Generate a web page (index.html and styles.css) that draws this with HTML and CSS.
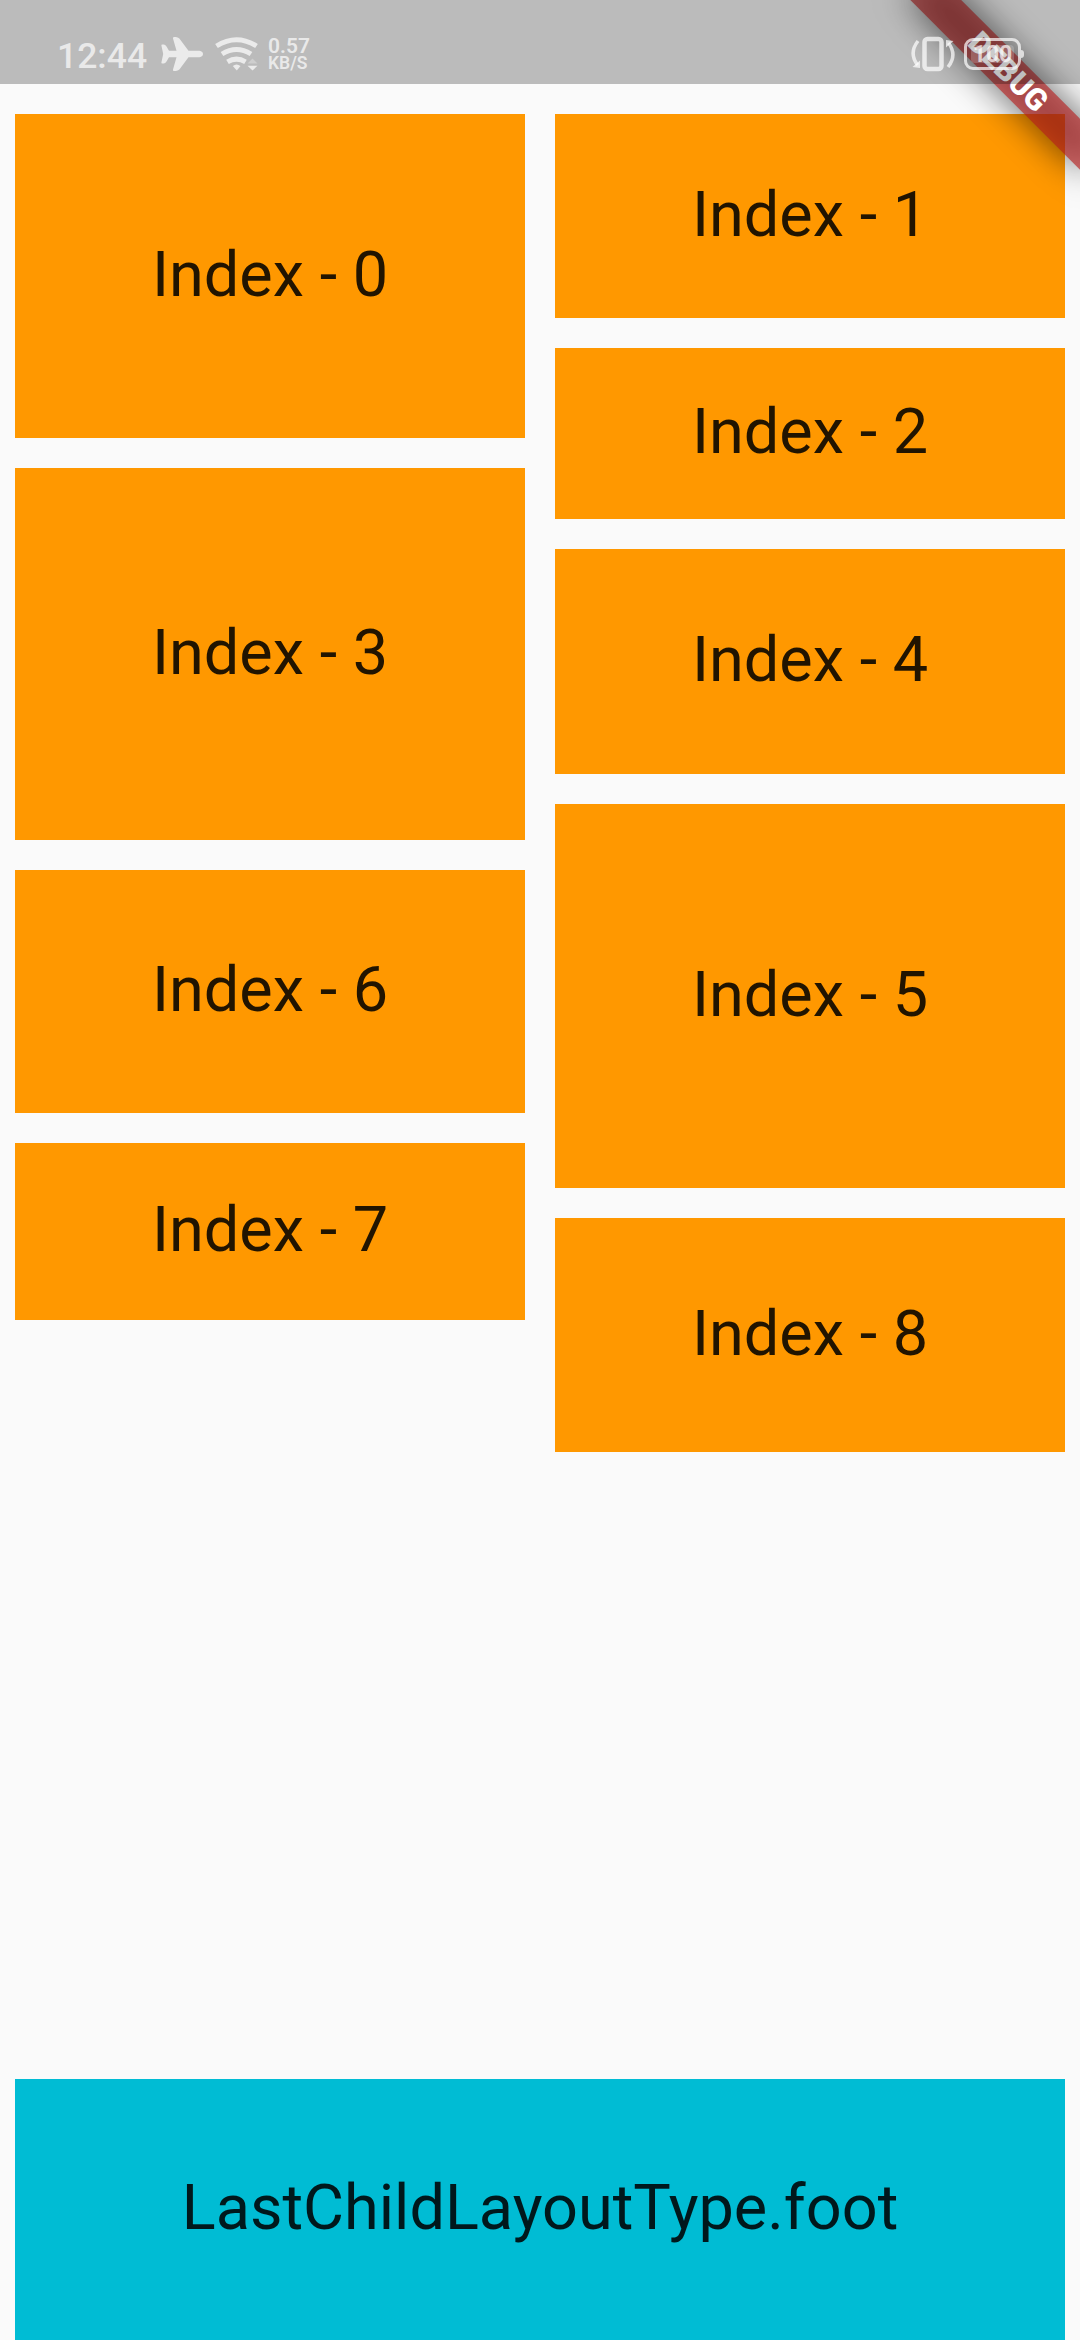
FILE: index.html
```html
<!DOCTYPE html>
<html lang="en">
<head>
<meta charset="utf-8">
<title>Waterfall flow</title>
<link rel="stylesheet" href="styles.css">
</head>
<body>
<div class="screen">
  <header class="status">
    <div class="status-left">
      <span class="clock">12:44</span>
      <svg class="plane" width="43" height="35" viewBox="0 0 43 35"><path d="M38.500 13.800H27.500L19.500 3C18 .8 16.500 0 14.500 0H13Q11.600 0 12 1.500L15.500 13.800H8L5.500 9.500Q4.300 7.600 2.700 7.600H1.200Q.2 7.600 .4 8.500L2.200 17L.4 25.500Q.2 26.500 1.200 26.500H2.700Q4.300 26.500 5.500 24.500L8 20.200H15.500L12 32.500Q11.600 34 13 34H14.500C16.500 34 18 33.200 19.500 31L27.500 20.200H38.500Q42 19.500 42 17T38.500 13.800Z"/></svg>
      <svg class="wifi" width="44" height="34" viewBox="0 0 44 34"><g fill="none" stroke-width="5"><path d="M1.500 9Q21.500-3.500 41.500 9"/><path d="M7 17Q21.500 8 36 17"/><path d="M12.500 24.800Q21.500 19.400 30.500 24.800"/></g><path class="solid" d="M17.800 29Q21.500 26 25.500 29L21.800 33.500Z"/><path class="faint" d="M32.500 26.500L37.500 21.500L42.500 26.500Z"/><path class="solid" d="M32.500 28.800H42.500L37.500 33.500Z"/></svg>
      <span class="rate"><span class="rate-value">0.57</span><span class="rate-unit">KB/S</span></span>
    </div>
    <div class="status-right">
      <svg class="vibrate" width="44" height="36" viewBox="0 0 44 36"><g fill="none" stroke-width="3.500"><rect x="13.500" y="3" width="17" height="30" rx="3" stroke-width="4.500"/><path d="M7 5Q-2.500 17 6.500 29"/><path d="M37 31Q46.500 19 37.500 7"/></g><path class="solid" d="M1.500 31L9 24.500V32ZM42.500 5L35 4V11.500Z"/></svg>
      <span class="battery"><span>100</span></span>
    </div>
  </header>
  <main class="flow">
    <div class="column">
      <div class="card h324">Index - 0</div>
      <div class="card h372">Index - 3</div>
      <div class="card h243">Index - 6</div>
      <div class="card h177">Index - 7</div>
    </div>
    <div class="column">
      <div class="card h204">Index - 1</div>
      <div class="card h171">Index - 2</div>
      <div class="card h225">Index - 4</div>
      <div class="card h384">Index - 5</div>
      <div class="card h234">Index - 8</div>
    </div>
  </main>
  <footer class="card foot">LastChildLayoutType.foot</footer>
  <div class="banner"><span>DEBUG</span></div>
</div>
</body>
</html>
```
FILE: styles.css
```css
* { box-sizing: border-box; }
body { margin: 0; background: #fafafa; font-family: Roboto, sans-serif; }
.screen {
  position: relative;
  display: flex;
  flex-direction: column;
  width: 1080px;
  height: 2340px;
  overflow: hidden;
}
.status {
  position: relative;
  z-index: 2;
  display: flex;
  justify-content: space-between;
  height: 84px;
  padding: 0 56px 0 57px;
  background: rgba(0, 0, 0, .25);
  color: rgba(255, 255, 255, .7);
}
.status-left, .status-right { display: flex; align-items: flex-start; }
.status svg { fill: currentColor; stroke: none; }
.status g { stroke: currentColor; fill: none; }
.status .faint { opacity: .4; }
.clock { width: 104px; padding-top: 35px; font-size: 35.5px; line-height: 42px; font-weight: 500; }
.plane { margin-top: 37px; }
.wifi { margin: 37px 0 0 11px; }
.rate {
  display: flex;
  flex-direction: column;
  margin: 37px 0 0 9px;
  font-weight: 600;
}
.rate-value { font-size: 21px; line-height: 18px; }
.rate-unit { font-size: 17.5px; line-height: 16px; }
.vibrate { margin-top: 36px; }
.battery {
  position: relative;
  display: flex;
  align-items: center;
  justify-content: center;
  width: 57px;
  height: 32px;
  margin: 38px 3px 0 9px;
  border: 3.5px solid currentColor;
  border-radius: 9px;
  font-size: 23px;
  font-weight: 700;
}
.battery::before {
  content: "";
  position: absolute;
  inset: 4px;
  border-radius: 4px;
  background: rgba(255, 255, 255, .2);
}
.battery::after {
  content: "";
  position: absolute;
  right: -6px;
  top: 9px;
  width: 3px;
  height: 8px;
  border-radius: 0 3px 3px 0;
  background: currentColor;
}
.flow { display: flex; flex: 1; gap: 30px; padding: 30px 15px 0; }
.column { display: flex; flex: 1; flex-direction: column; gap: 30px; }
.card {
  display: flex;
  align-items: center;
  justify-content: center;
  padding-bottom: 3px;
  background: #ff9800;
  color: rgba(0, 0, 0, .87);
  font-size: 63px;
  line-height: 74px;
}
.h171 { height: 171px; }
.h177 { height: 177px; }
.h204 { height: 204px; }
.h225 { height: 225px; }
.h234 { height: 234px; }
.h243 { height: 243px; }
.h324 { height: 324px; }
.h372 { height: 372px; }
.h384 { height: 384px; }
.foot { height: 261px; margin: 0 15px; background: #00bcd4; }
.banner {
  position: absolute;
  z-index: 1;
  left: 960px;
  top: 84px;
  width: 240px;
  height: 36px;
  transform: rotate(45deg);
  transform-origin: 120px -84px;
  color: #fff;
  font-size: 30.6px;
  line-height: 36px;
  font-weight: 900;
  text-align: center;
}
.banner::before, .banner::after { content: ""; position: absolute; inset: 0; }
.banner::before { background: rgba(0, 0, 0, .6); filter: blur(18px); }
.banner::after { background: rgba(183, 28, 28, .627); }
.banner span { position: relative; z-index: 1; }
```
